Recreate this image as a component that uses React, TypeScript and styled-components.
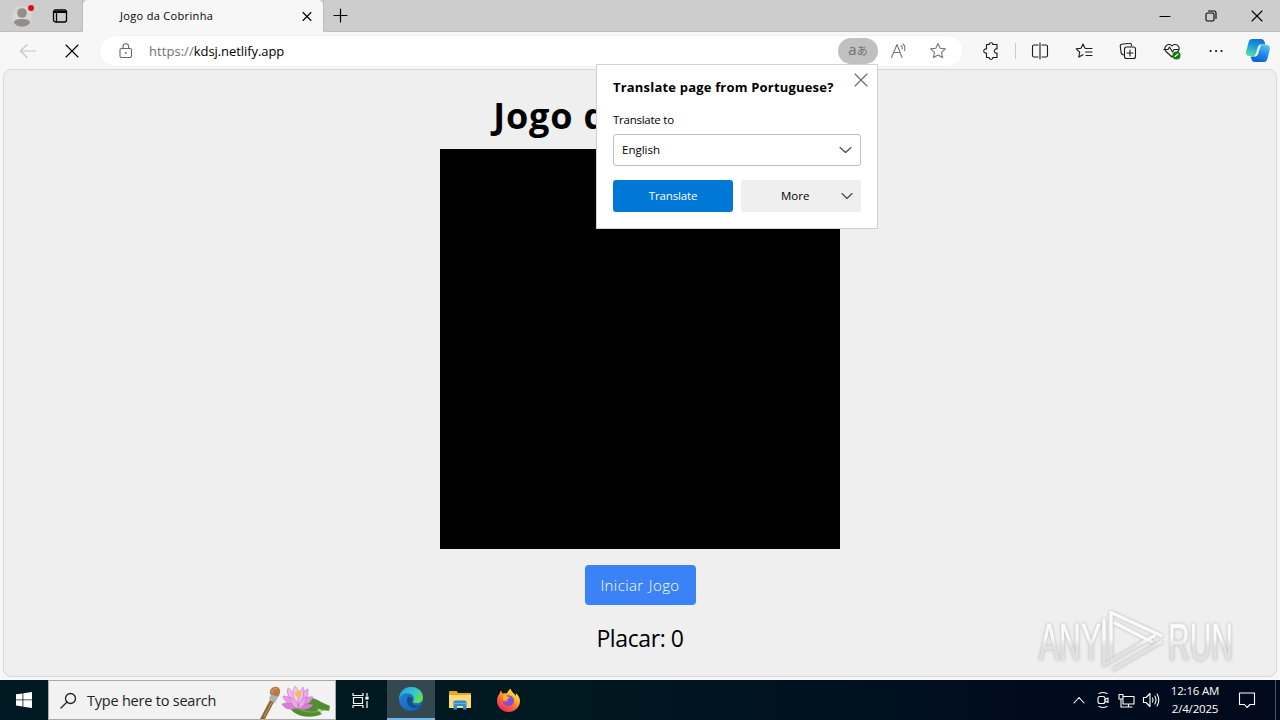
import React from 'react';
import styled, { createGlobalStyle } from 'styled-components';

const GlobalStyle = createGlobalStyle`
  * { box-sizing: border-box; }
  body { margin: 0; overflow: hidden; background: #f7f7f7; font-family: "Open Sans", "Noto Sans", sans-serif; color: #000; }
  button { font: inherit; border: 0; padding: 0; }
  svg { display: block; flex: none; overflow: visible; }
`;

const Desktop = styled.div`
  position: relative; width: 1280px; height: 720px; display: flex; flex-direction: column; overflow: hidden;
`;
const Text = styled.span<{ size: number; track?: number; word?: number; weight?: number; color?: string }>`
  font-size: ${p => p.size}px; letter-spacing: ${p => p.track ?? 0}px; word-spacing: ${p => p.word ?? 0}px;
  font-weight: ${p => p.weight ?? 400}; color: ${p => p.color ?? 'inherit'}; white-space: nowrap;
`;
const TabStrip = styled.header`
  height: 32px; flex: none; display: flex; background: #cdcdcd;
`;
const StripStart = styled.div`
  width: 83px; display: flex; align-items: center; padding-left: 12px; gap: 20px;
  border-right: 1px solid #bdbdbd; border-bottom: 1px solid #bdbdbd; border-bottom-right-radius: 4px;
`;
const Tab = styled.div`
  width: 240px; display: flex; align-items: center; justify-content: space-between;
  padding: 0 11px 1px 37px; background: #f7f7f7; border-radius: 5px 5px 0 0;
`;
const StripEnd = styled.div`
  flex: 1; display: flex; align-items: center; justify-content: space-between; padding: 0 17px 0 9px;
  border-left: 1px solid #bdbdbd; border-bottom: 1px solid #bdbdbd; border-bottom-left-radius: 4px;
`;
const WindowButtons = styled.div`
  display: flex; gap: 34px; align-items: center;
`;
const Toolbar = styled.div`
  height: 36px; flex: none; display: flex; align-items: center; background: #f7f7f7; padding: 2px 10px 0 19px;
`;
const NavButtons = styled.div`
  width: 80px; display: flex; gap: 28px; align-items: center;
`;
const AddressBar = styled.div`
  width: 865px; height: 32px; border-radius: 16px; background: #fff; display: flex; align-items: center;
  padding: 0 16px 0 18px; border: 1px solid #f2f2f2; margin-bottom: 1px;
`;
const Url = styled.div`
  flex: 1; padding-left: 15px; display: flex; height: 20px; align-items: center;
`;
const TranslateChip = styled.div`
  width: 40px; height: 26px; border-radius: 13px; background: #c0c0c0; color: #707070; display: flex; align-items: center;
  justify-content: center; margin-right: 12px; font: 15px/1 "Open Sans", sans-serif; padding-bottom: 2px;
  small { font-size: 11px; margin-top: 2px; font-family: "Noto Sans CJK JP", sans-serif; line-height: 1; }
`;
const AddressIcons = styled.div`
  display: flex; gap: 21px;
`;
const ToolIcons = styled.div`
  flex: 1; display: flex; align-items: center; padding-left: 18px; gap: 26px; margin-bottom: 1px;
  svg:last-child { margin-left: -5px; }
`;
const Divider = styled.i`
  width: 1px; height: 16px; flex: none; background: #ccc; margin: 0 -11px;
`;
const Viewport = styled.main`
  height: 608px; flex: none; margin: 1px 3px 3px; border: 1px solid #d9d9d9; border-radius: 8px; background: #efefef;
  display: flex; flex-direction: column; align-items: center;
`;
const Heading = styled.h1`
  margin: 26px 0 13px; height: 40px; line-height: 40px; font-weight: 700; white-space: nowrap;
`;
const Board = styled.div`
  width: 400px; height: 400px; flex: none; background: #000;
`;
const StartButton = styled.button`
  margin-top: 16px; width: 111px; height: 40px; flex: none; border-radius: 4px; background: #3b82f6; color: #fff;
`;
const Score = styled.div`
  margin-top: 17px; height: 32px; line-height: 32px;
`;
const Popup = styled.section`
  position: absolute; left: 596px; top: 64px; width: 282px; height: 165px; background: #fff; border: 1px solid #d0d0d0;
  padding: 11px 16px 16px; display: flex; flex-direction: column;
`;
const PopupHead = styled.div`
  height: 21px; display: flex; align-items: center; justify-content: space-between;
  svg { margin: -13px -6px 0 0; }
`;
const PopupLabel = styled.label`
  height: 20px; line-height: 20px; margin-top: 13px; display: flex;
`;
const SelectBox = styled.div`
  height: 32px; margin: 4px 0 14px; border: 1px solid #bebebe; border-radius: 3px; display: flex; align-items: center;
  justify-content: space-between; padding: 0 8px 1px; flex: none;
`;
const Actions = styled.div`
  display: flex; gap: 8px;
`;
const Action = styled.button<{ primary?: boolean }>`
  width: 120px; height: 32px; border-radius: 3px; display: flex; align-items: center;
  justify-content: ${p => (p.primary ? 'center' : 'space-between')}; padding: ${p => (p.primary ? '0 0 1px' : '0 8px 1px 40px')};
  background: ${p => (p.primary ? '#0078d7' : '#efefef')}; color: ${p => (p.primary ? '#fff' : '#000')};
`;
const Watermark = styled.svg`
  position: absolute; left: 1030px; top: 602px; filter: drop-shadow(0 0 1.5px #aaa); opacity: 0.9;
`;
const Taskbar = styled.footer`
  height: 40px; flex: none; display: flex; background: linear-gradient(90deg, #001821 0%, #001820 45%, #000c1e 80%, #000a1c 100%); color: #fff;
`;
const TaskButton = styled.div<{ active?: boolean }>`
  width: ${p => (p.active ? 48 : 49)}px; display: flex; align-items: center; justify-content: center;
  background: ${p => (p.active ? '#344850' : 'transparent')}; border-bottom: ${p => (p.active ? '2px solid #76b5ea' : '0')};
`;
const StartMenu = styled(TaskButton)` width: 48px; `;
const TaskView = styled(TaskButton)` width: 51px; padding-right: 3px; `;
const SearchBox = styled.div`
  width: 288px; background: #f2f2f2; border: 1px solid #aaa; color: #222; display: flex; align-items: center; padding: 0 4px 0 11px;
`;
const SearchText = styled.div` flex: 1; padding-left: 10px; display: flex; `;
const Tray = styled.div`
  margin-left: auto; display: flex; align-items: center; gap: 7px; border-right: 1px solid #4d5664; margin-right: 4px; padding-right: 19px;
  svg:first-child { margin-right: 3px; }
`;
const Clock = styled.div`
  width: 62px; display: flex; flex-direction: column; align-items: center; line-height: 18px; margin: 0 5px 1px -3px;
`;

type IconProps = { w?: number; h?: number; box?: string; color?: string; sw?: number; children: React.ReactNode };
const Icon = ({ w = 18, h = w, box = '0 0 18 18', color = '#1b1b1b', sw = 1.1, children }: IconProps) => (
  <svg width={w} height={h} viewBox={box} fill="none" stroke={color} strokeWidth={sw} strokeLinecap="round" strokeLinejoin="round">{children}</svg>
);
const Chevron = ({ w = 12, h = 5 }: { w?: number; h?: number }) => <Icon w={w} h={8} box={`0 0 ${w} 8`} color="#444"><path d={`M1 1.500l${w / 2 - 1} ${h} ${w / 2 - 1}-${h}`} /></Icon>;
const STAR = 'M9 1.5l2.2 4.8 5.2.6-3.9 3.5 1.1 5.2L9 13l-4.6 2.6 1.1-5.2L1.6 6.9l5.2-.6z';

const EdgeLogo = () => (
  <svg width="24" height="24" viewBox="0 0 24 24">
    <defs>
      <linearGradient id="edgeTop" x1="0" y1="0" x2="1" y2="0.6"><stop stopColor="#239bdf" /><stop offset=".55" stopColor="#30c4d1" /><stop offset="1" stopColor="#64dc58" /></linearGradient>
      <linearGradient id="edgeLow" x1="0" y1="0" x2="1" y2="1"><stop stopColor="#2289df" /><stop offset="1" stopColor="#105ab0" /></linearGradient>
    </defs>
    <circle cx="12" cy="12" r="12" fill="url(#edgeLow)" />
    <path d="M0 12C.6 4.600 5.600 0 12 0c7 0 12 4.800 12 10.200 0 4-3 6.100-6.300 6.100-3 0-4.300-1-3.400-2.300 1.700-3-.2-6.500-4-7.400C5.600 5.400 1.200 8 0 12z" fill="url(#edgeTop)" />
    <path d="M8.500 10.500c-2 5 1.500 10 6.500 10.300 3 .2 5.200-.7 7.200-2.200-3.200 1.300-6.200 1-8.200-.9-1.800-1.700-1.700-3-.3-4.400 0-2.800-3.700-4.800-5.200-2.800z" fill="#174b82" />
  </svg>
);
const CopilotLogo = () => (
  <svg width="24" height="23" viewBox="0 0 24 23">
    <defs>
      <linearGradient id="copA" x1=".6" y1="0" x2=".3" y2="1"><stop stopColor="#1570d2" /><stop offset=".45" stopColor="#16a0dc" /><stop offset="1" stopColor="#55dda5" /></linearGradient>
      <linearGradient id="copB" x1=".8" y1="0" x2=".3" y2="1"><stop stopColor="#56c9f3" /><stop offset=".5" stopColor="#2385ec" /><stop offset="1" stopColor="#0960ce" /></linearGradient>
    </defs>
    <path d="M6 0h9c2 0 3 1 3.600 3l.8 2.500h-3c-2 0-2.800 1-3.400 3l-1.500 5c-.8 2.500-2 3.500-4 3.500H4c-3.500 0-4.500-2-3.700-5L2.500 3.500C3.200 1 4.200 0 6 0z" fill="url(#copA)" />
    <path d="M18 23H9c-2 0-3-1-3.600-3l-.8-2.500h3c2 0 2.800-1 3.400-3l1.500-5c.8-2.500 2-3.500 4-3.500H20c3.500 0 4.500 2 3.700 5l-2.200 8.500C20.800 22 19.800 23 18 23z" fill="url(#copB)" />
    <path d="M12.200 8c.5-1.600 1.300-2.100 2.800-2.200-.5.700-.9 1.700-1.300 3.100L12 14.500c-.6 1.900-1.400 2.700-3 2.800.5-.8.900-1.800 1.300-3.100z" fill="#f7f7f7" stroke="#f7f7f7" strokeWidth=".6" />
  </svg>
);
const LotusArt = () => (
  <svg width="76" height="38" viewBox="0 0 76 38">
    <path d="M34 23c8-8 25-8 32-2l9 4-1 5-12-2 5 5c-12 6-32 2-33-10z" fill="#518e32" />
    <path d="M42 27c8 5 18 5 27 2" stroke="#78b84a" fill="none" />
    <g stroke="#b868b8" strokeWidth=".5">
      <path d="M42 25c-9-1-13-5-14-10 6 0 11 3 14 10z" fill="#e69ee0" />
      <path d="M43 25c7 0 13-3 15-9-6-1-11 2-15 9z" fill="#e394dc" />
      <path d="M42 25C34 18 31 12 33 7c5 3 9 9 9 18z" fill="#f1b6ec" />
      <path d="M43 25c0-9 4-15 10-17 1 7-3 14-10 17z" fill="#eda9e8" />
      <path d="M42 25c-5-8-5-15-2-20 5 5 6 13 2 20z" fill="#f6c8ed" />
      <path d="M43 25c0-8 1-14 5-19 2 7 0 14-5 19z" fill="#f3b7ea" />
      <path d="M42 27c-8 3-13 0-15-4 6-2 11-1 15 4zM43 27c6 3 12 1 15-3-6-2-11-1-15 3z" fill="#d77fd3" />
      <path d="M43 28c-5-2-8-7-8-12 6 2 9 7 8 12zM43 28c1-6 3-10 8-12 0 6-3 11-8 12z" fill="#eba7e6" />
    </g>
    <path d="M39 12l5-3 3 4-4 4z" fill="#f4bd4f" />
    <path d="M5 38l10-19 4 2-9 17z" fill="#8b6939" /><path d="M9 36l8-15" stroke="#bc975c" fill="none" />
    <path d="M14 18l2-5 7 3-3 6z" fill="#aab0b4" />
    <path d="M15 13c-1-5 3-8 7-7 4 1 4 6 1 10z" fill="#bd7848" /><path d="M17 12c0-3 2-5 5-4" stroke="#e0a273" fill="none" />
  </svg>
);
const FolderLogo = () => (
  <svg width="22" height="19" viewBox="0 0 22 19">
    <path d="M0 1c0-.6.4-1 1-1h6.500l1.700 2H21c.6 0 1 .4 1 1v14H0z" fill="#e9a526" /><path d="M0 4h22v13H0z" fill="#ffdb75" />
    <path d="M4.500 18.500v-7c0-1.300.7-2 2-2h9c1.300 0 2 .7 2 2v7h-3.500V15H8v3.500z" fill="#308ed2" /><path d="M5 12.500h12" stroke="#62b5ec" />
  </svg>
);
const FirefoxLogo = () => (
  <svg width="23" height="23" viewBox="0 0 23 23">
    <defs>
      <linearGradient id="fox" x1=".85" y1="0" x2=".2" y2="1"><stop stopColor="#fff44f" /><stop offset=".3" stopColor="#ffc128" /><stop offset=".6" stopColor="#ff6a35" /><stop offset="1" stopColor="#ef1c68" /></linearGradient>
    </defs>
    <path d="M2.800 4.200c.3-1.500 1-2.400 1.500-2.700.1 1.300.7 2.300 1.500 3 2-.5 3.200-.3 4.200 0C10.300 2.600 12 .6 14 0c0 2.300 1.800 3.600 3.600 5.200.8.500 1 1.300 1.200 1.800.4-.9.2-2-.2-3C21.500 6 23 9 23 12c0 6-5 11-11.400 11S0 18 0 12c0-3 1-5.800 2.800-7.800z" fill="url(#fox)" />
    <path d="M7.500 8c1.500-2 6-3 8.500.5 2.300 3.500.3 8.500-4.500 8.500-3.500 0-5.700-2.200-5.500-5.300 1.300 1.300 2.500 1.300 3.500.8l2-1.500c-1.500-.3-3.200-1-4-3z" fill="#8051d8" />
    <path d="M6 6.200c1.500-.4 3 .2 4 1.300l2.700.4c0 1.200-2 1.800-2.500 2.300-.4 1.600-2.700 1.300-4.200 1z" fill="#ffb02c" />
  </svg>
);

export default function App() {
  return (
    <Desktop>
      <GlobalStyle />
      <TabStrip>
        <StripStart>
          <svg width="20" height="22" viewBox="0 0 20 22">
            <circle cx="10" cy="11" r="10" fill="#d8d5d3" /><circle cx="10" cy="8" r="4.800" fill="#918e8c" />
            <path d="M2 17.500C2 15 5 14 10 14s8 1 8 3.500C17 20 13.500 21.500 10 21.500S3 20 2 17.500z" fill="#918e8c" /><circle cx="19" cy="3" r="3" fill="#e30b17" />
          </svg>
          <Icon w={16} box="0 0 16 16" color="#000" sw={1.3}><rect x="1.500" y="2" width="13" height="12" rx="2" /><path d="M2.500 4h11.500" strokeWidth="2.200" /><path d="M4.500 4v10" /></Icon>
        </StripStart>
        <Tab><Text size={11} track={0.33}>Jogo da Cobrinha</Text><Icon w={10} box="0 0 10 10" color="#000"><path d="M1 1.500l8 8M9 1.500l-8 8" /></Icon></Tab>
        <StripEnd>
          <Icon w={15} box="0 0 15 15" color="#000" sw={1.2}><path d="M1 7.500h13M7.500 1v13" /></Icon>
          <WindowButtons>
            <Icon w={12} box="0 0 12 12" color="#000"><path d="M1 6.500h10" /></Icon>
            <Icon w={12} box="0 0 12 12" color="#000"><rect x="1" y="3" width="8" height="8" rx="1.500" /><path d="M3.500 1H9c1.300 0 2 .7 2 2v5.500" /></Icon>
            <Icon w={12} box="0 0 12 12" color="#000"><path d="M1 1l10 10M11 1L1 11" /></Icon>
          </WindowButtons>
        </StripEnd>
      </TabStrip>
      <Toolbar>
        <NavButtons>
          <Icon color="#c6c6c6"><path d="M16.500 9h-15M8 2.500L1.500 9 8 15.500" /></Icon>
          <Icon w={14} box="0 0 14 14" color="#000"><path d="M1 1l12 12M13 1L1 13" /></Icon>
        </NavButtons>
        <AddressBar>
          <Icon w={16} box="0 0 16 16" color="#666"><rect x="2" y="5.500" width="11.500" height="9" rx="1.500" /><path d="M5 5.500V3.500a2.800 2.800 0 015.600 0v2" /><circle cx="7.800" cy="10" r=".4" /></Icon>
          <Url><Text size={13} track={0.05} color="#707070">https://</Text><Text size={13} track={-0.07}>kdsj.netlify.app</Text></Url>
          <TranslateChip>a<small>あ</small></TranslateChip>
          <AddressIcons>
            <Icon color="#777"><path d="M1.500 15.500L7 2.500l5 13M3.500 10.500h6.500M11 3.500c1 .8 1.500 2.200 1 3.500M13 2c1.700 1.500 2.300 4 1.500 6.500" /></Icon>
            <Icon color="#777"><path d={STAR} /></Icon>
          </AddressIcons>
        </AddressBar>
        <ToolIcons>
          <Icon><path d="M4.500 2.500h2.700c-.4-2.400 4-2.400 3.600 0h4.200v4.400c-1.800-.3-2.700.8-2.700 2.100s.9 2.400 2.700 2.100v4.400h-4.200c.4 2.400-4 2.400-3.600 0H4.500v-4.400c-3.700.4-3.700-4.600 0-4.200z" /></Icon>
          <Divider />
          <Icon><path d="M7 3H3.200C2 3 1.500 3.600 1.500 4.500v9c0 .9.500 1.500 1.700 1.500H7M11 3h3.800c1.200 0 1.700.6 1.700 1.500v9c0 .9-.5 1.500-1.700 1.500H11M9 1v16" /></Icon>
          <Icon><path d="M10.500 6.300H10L8 2 6 6.300l-4.800.6 3.500 3.300-.9 4.900L8 12.700M11 6.500h6M10.500 10H17M11 13.500h6" /></Icon>
          <Icon><path d="M4.500 13c-1.500-.3-2-1-2.300-2L1.300 4.500c-.2-1.200.3-2 1.500-2.200l7.500-1c1.200-.2 2 .4 2.200 1.500l.2.700" /><rect x="5.500" y="5" width="11" height="11.500" rx="2" /><path d="M11 8v6M8 11h6" /></Icon>
          <Icon><path d="M3 9.500L9 15l6-5.500c4-5-3-9.500-6-5.500-3-4-9.500.5-6 5.500M1 7.500h4l1.500-2.500 3 5 1.500-2.500h4" /><circle cx="13.500" cy="13.500" r="3.500" fill="#107c10" stroke="#107c10" /><path d="M12 14.500l3-2.500" stroke="#fff" /></Icon>
          <Icon color="#111" sw={2}><path d="M3.500 9h.1M9 9h.1M14.500 9h.1" /></Icon>
          <CopilotLogo />
        </ToolIcons>
      </Toolbar>
      <Viewport>
        <Heading><Text size={36} track={0.8} weight={700}>Jogo </Text><Text size={36} track={-1.35} weight={700}>da Cobrinha</Text></Heading>
        <Board />
        <StartButton><Text size={15} track={0.4} word={1} weight={300}>Iniciar Jogo</Text></StartButton>
        <Score><Text size={23} track={-0.4}>Placar: 0</Text></Score>
      </Viewport>
      <Popup>
        <PopupHead><Text size={13} track={0.19} weight={700}>Translate page from Portuguese?</Text><Icon w={12} box="0 0 12 12" color="#666"><path d="M0 0l12 12M12 0L0 12" /></Icon></PopupHead>
        <PopupLabel><Text size={11.500} track={-0.25}>Translate to</Text></PopupLabel>
        <SelectBox><Text size={11.500}>English</Text><Chevron w={13} /></SelectBox>
        <Actions>
          <Action primary><Text size={11.500} track={-0.15}>Translate</Text></Action>
          <Action><Text size={11.500}>More</Text><Chevron /></Action>
        </Actions>
      </Popup>
      <Watermark width="210" height="76" viewBox="0 0 210 76" fill="none">
        <defs><linearGradient id="mark" gradientUnits="userSpaceOnUse" x1="0" y1="8" x2="0" y2="70"><stop offset=".45" stopColor="#fcfcfc" /><stop offset=".6" stopColor="#e0e0e0" /></linearGradient></defs>
        <g fill="url(#mark)" stroke="url(#mark)" strokeWidth=".6" fontFamily="Liberation Sans" fontSize="52">
          <text x="9" y="58" textLength="62" lengthAdjust="spacingAndGlyphs">ANY</text>
          <text x="138" y="58" textLength="65" lengthAdjust="spacingAndGlyphs">RUN</text>
        </g>
        <g stroke="url(#mark)" strokeWidth="3.500" strokeLinecap="round" strokeLinejoin="round">
          <path d="M74 18v45l50-29M81 55V10.500l50 23M85 21l37 19M73 67M84 67l47-27" />
        </g>
      </Watermark>
      <Taskbar>
        <StartMenu><svg width="16" height="16" viewBox="0 0 16 16" fill="#fff"><path d="M0 2.300L6.500 1.400v6.100H0zM7.300 1.300L16 0v7.500H7.300zM0 8.300h6.500v6.200L0 13.600zM7.300 8.300H16V16l-8.700-1.300z" /></svg></StartMenu>
        <SearchBox>
          <Icon w={17} box="0 0 17 17" color="#222" sw={1.3}><circle cx="10.500" cy="6.500" r="5" /><path d="M7 10L1 16" /></Icon>
          <SearchText><Text size={14.500} track={-0.22}>Type here to search</Text></SearchText>
          <LotusArt />
        </SearchBox>
        <TaskView><Icon w={17} box="0 0 17 17" color="#fff" sw={1.2}><path d="M1 1v2.500h10V1M1 16v-2.500h10V16M1.500 5.500h9v6h-9zM15 1v3M15 9v7" strokeLinecap="butt" /><path d="M14 5h2v2h-2z" fill="#fff" /></Icon></TaskView>
        <TaskButton active><EdgeLogo /></TaskButton>
        <TaskButton><FolderLogo /></TaskButton>
        <TaskButton><FirefoxLogo /></TaskButton>
        <Tray>
          <Icon w={12} box="0 0 12 12" color="#fff"><path d="M1 9l5-5.500L11 9" /></Icon>
          <Icon w={16} box="0 0 16 16" color="#fff"><rect x="3" y="4.500" width="7" height="7" rx="2" /><path d="M10 7.500l3-1.500v4.500l-3-1.500M4 1.500q4-2 8 0M4 14.500q4 2 8 0" /></Icon>
          <Icon w={17} box="0 0 17 17" color="#fff"><path d="M5 4.500h11v7.500H5V8M10.500 12v3M7 15h7M1 2.500h4V7H1zM3 7v8h3" /></Icon>
          <Icon w={18} color="#fff"><path d="M1.500 6.500h2.500l4-4v13l-4-4H1.500zM10.500 7q1.200 2 0 4M12.800 5q2.400 4 0 8M15 3q3.600 6 0 12" /></Icon>
          <Clock><Text size={11.500} track={-0.2}>12:16 AM</Text><Text size={11.500} track={-0.2}>2/4/2025</Text></Clock>
          <Icon w={18} color="#fff"><path d="M1.500 2h15v11.500H12L9 16.500 6.500 13.500h-5z" /></Icon>
        </Tray>
      </Taskbar>
    </Desktop>
  );
}
